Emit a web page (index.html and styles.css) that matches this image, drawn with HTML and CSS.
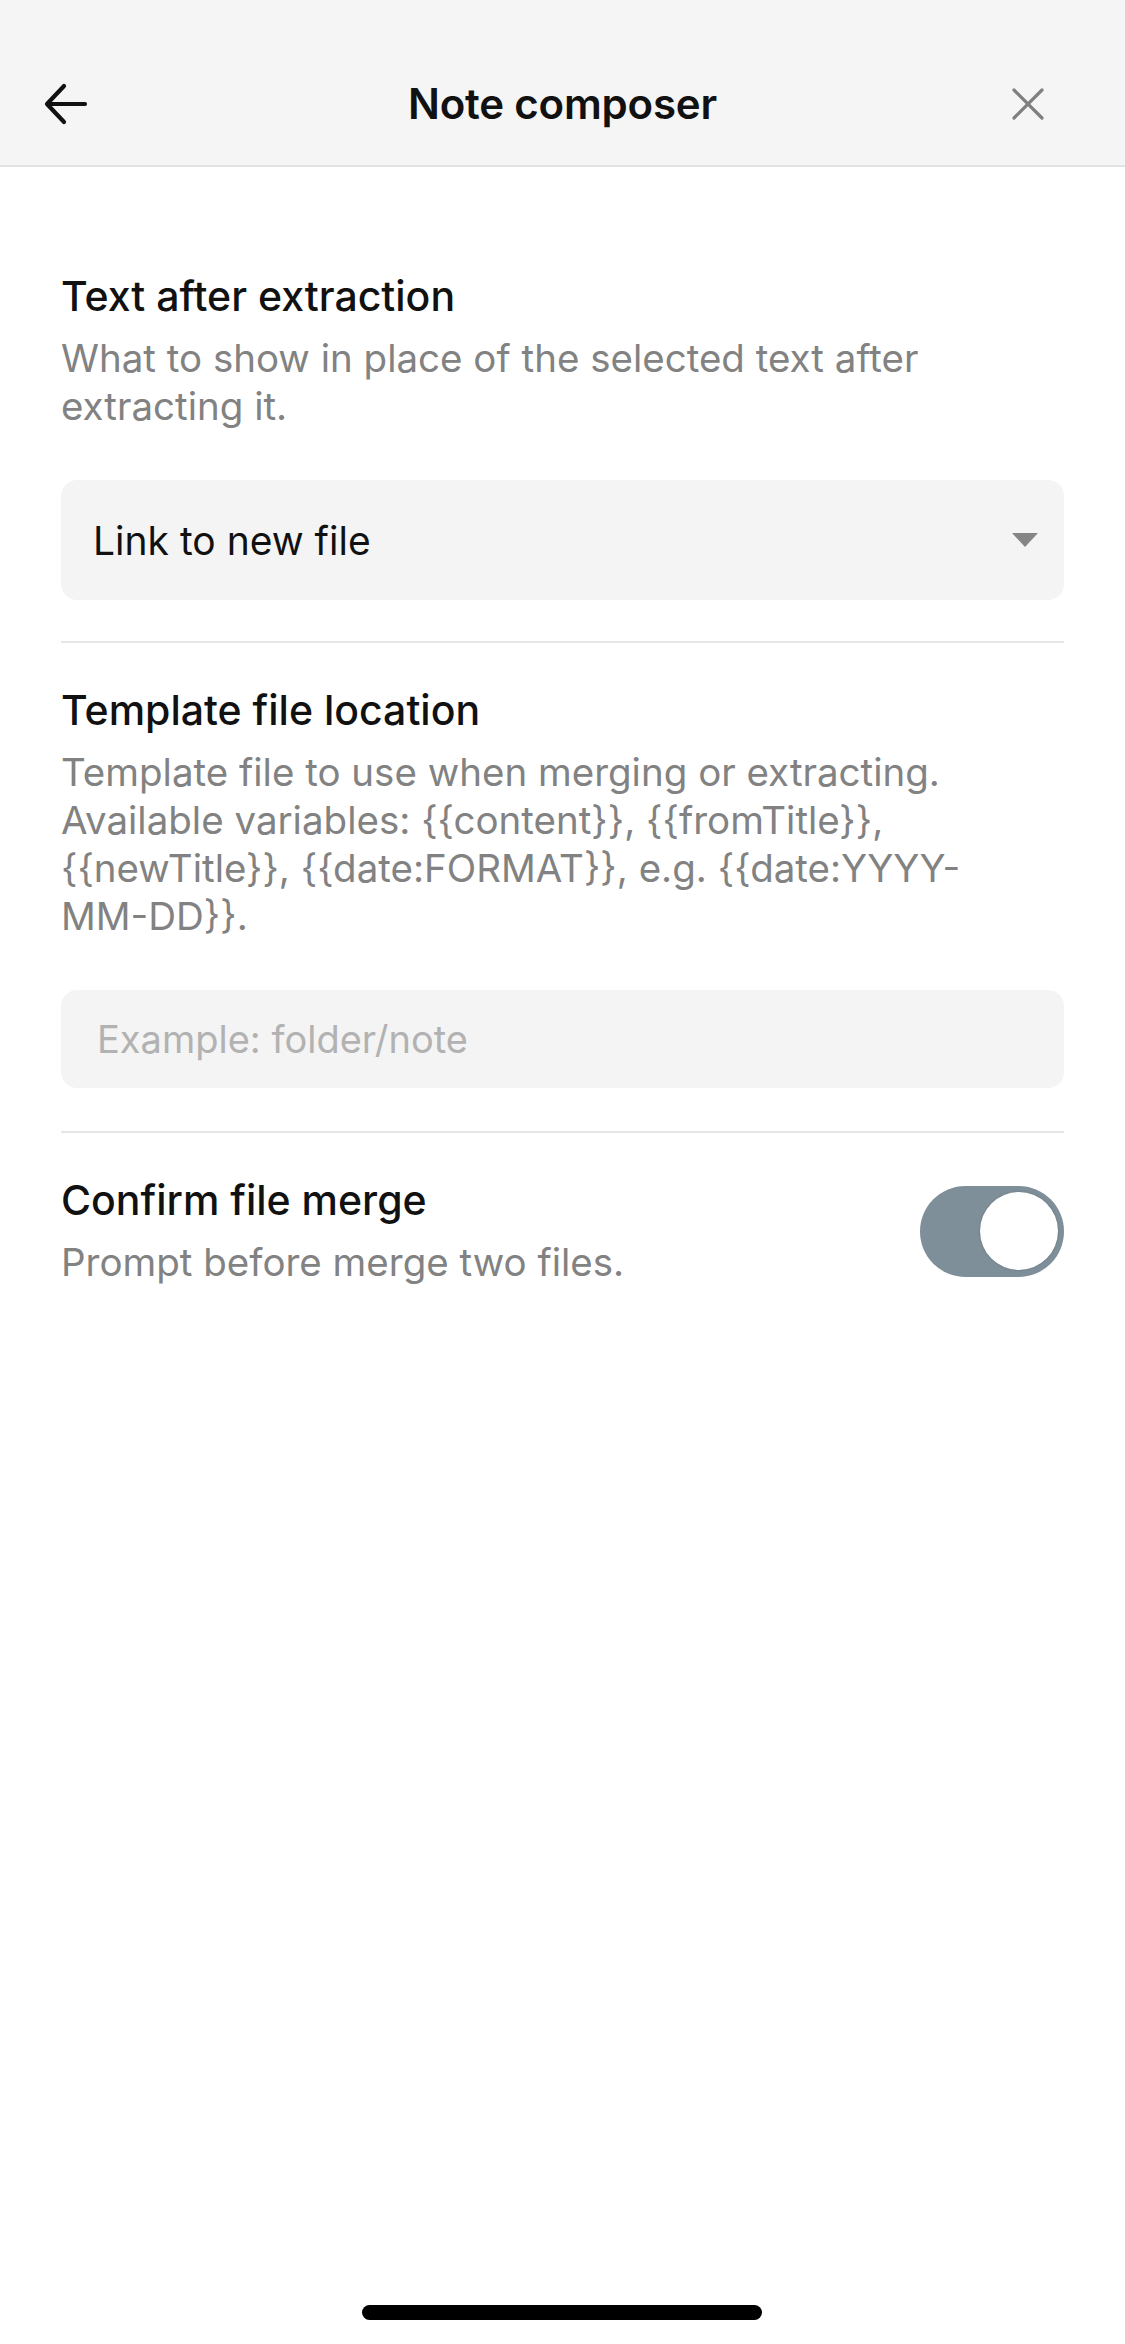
FILE: index.html
```html
<!DOCTYPE html>
<html lang="en">
<head>
<meta charset="utf-8">
<title>Note composer</title>
<link rel="stylesheet" href="styles.css">
</head>
<body>
<div class="screen">
  <header class="topbar">
    <div class="side left">
      <button class="icon-btn back" aria-label="Back">
        <svg width="44" height="42" viewBox="0 0 44 42" fill="none" stroke="#111" stroke-width="4.2" stroke-linecap="round" stroke-linejoin="round">
          <path d="M41 21H4M20 3L3 21l17 18"/>
        </svg>
      </button>
    </div>
    <h1 class="title">Note composer</h1>
    <div class="side right">
      <button class="icon-btn close" aria-label="Close">
        <svg width="32" height="32" viewBox="0 0 32 32" fill="none" stroke="#808080" stroke-width="3.2" stroke-linecap="round">
          <path d="M2 2L30 30M30 2L2 30"/>
        </svg>
      </button>
    </div>
  </header>

  <main class="settings">
    <section class="setting stacked">
      <div class="info">
        <div class="name">Text after extraction</div>
        <div class="desc">What to show in place of the selected text after extracting it.</div>
      </div>
      <div class="dropdown">
        <span class="dropdown-value">Link to new file</span>
        <span class="caret"></span>
      </div>
    </section>

    <section class="setting stacked">
      <div class="info">
        <div class="name">Template file location</div>
        <div class="desc">Template file to use when merging or extracting. Available variables: {{content}}, {{fromTitle}}, {{newTitle}}, {{date:FORMAT}}, e.g. {{date:YYYY-<span class="nowrap">MM-DD}}.</span></div>
      </div>
      <div class="text-input"><span class="placeholder">Example: folder/note</span></div>
    </section>

    <section class="setting row">
      <div class="info">
        <div class="name">Confirm file merge</div>
        <div class="desc">Prompt before merge two files.</div>
      </div>
      <div class="toggle on"><span class="knob"></span></div>
    </section>
  </main>

  <div class="home-indicator"></div>
</div>
</body>
</html>
```

FILE: styles.css
```css
* { box-sizing: border-box; }

html, body {
  margin: 0;
  padding: 0;
  background: #ffffff;
}

body {
  font-family: Inter, "Noto Sans", "Liberation Sans", sans-serif;
  color: #1a1a1a;
}

.screen {
  width: 1125px;
  height: 2344px;
  display: flex;
  flex-direction: column;
  position: relative;
  background: #ffffff;
}

.topbar {
  height: 167px;
  background: #f5f5f5;
  border-bottom: 2px solid #e3e3e3;
  display: grid;
  grid-template-columns: 1fr auto 1fr;
  align-items: center;
  padding: 42px 0 0 0;
  flex: none;
}

.side {
  display: flex;
  align-items: center;
}

.side.right {
  justify-content: flex-end;
}

.icon-btn {
  border: 0;
  background: transparent;
  padding: 0;
  width: 120px;
  height: 120px;
  display: flex;
  align-items: center;
  justify-content: center;
}

.back { margin-left: 6px; }
.close { margin-right: 67px; width: 60px; }

.title {
  margin: 0;
  font-size: 42px;
  font-weight: 600;
  letter-spacing: -0.2px;
  color: #111;
  line-height: 48px;
}

.settings {
  padding: 60px 61px 0 61px;
  display: flex;
  flex-direction: column;
}

.setting {
  padding: 43px 0 43px 0;
  border-top: 2px solid #e6e6e6;
}

.setting:first-child {
  border-top: 0;
  padding-top: 45px;
  padding-bottom: 41px;
}

.setting.stacked {
  display: flex;
  flex-direction: column;
  gap: 50px;
}

.setting.row {
  display: flex;
  align-items: center;
  justify-content: space-between;
  gap: 30px;
}

.name {
  font-size: 41px;
  line-height: 48px;
  font-weight: 500;
  color: #111;
  margin-bottom: 14px;
}

.desc {
  font-size: 38.5px;
  line-height: 48px;
  color: #828282;
}

.nowrap {
  white-space: nowrap;
}

.dropdown {
  height: 120px;
  background: #f4f4f4;
  border-radius: 16px;
  display: flex;
  align-items: center;
  justify-content: space-between;
  padding: 0 26px 0 32px;
}

.dropdown-value {
  font-size: 39px;
  color: #111;
}

.caret {
  width: 0;
  height: 0;
  border-left: 13px solid transparent;
  border-right: 13px solid transparent;
  border-top: 14px solid #858585;
}

.text-input {
  height: 98px;
  background: #f4f4f4;
  border-radius: 16px;
  display: flex;
  align-items: center;
  padding: 0 36px;
}

.placeholder {
  font-size: 38px;
  color: #b2b2b2;
}

.toggle {
  flex: none;
  width: 144px;
  height: 91px;
  border-radius: 46px;
  background: #7e8f9a;
  display: flex;
  align-items: center;
  justify-content: flex-end;
  padding: 0 6px;
}

.knob {
  width: 78px;
  height: 78px;
  border-radius: 50%;
  background: #ffffff;
  box-shadow: 0 0 2px rgba(0,0,0,0.25);
}

.home-indicator {
  position: absolute;
  left: 362px;
  top: 2305px;
  width: 400px;
  height: 15px;
  border-radius: 8px;
  background: #000;
}
```
